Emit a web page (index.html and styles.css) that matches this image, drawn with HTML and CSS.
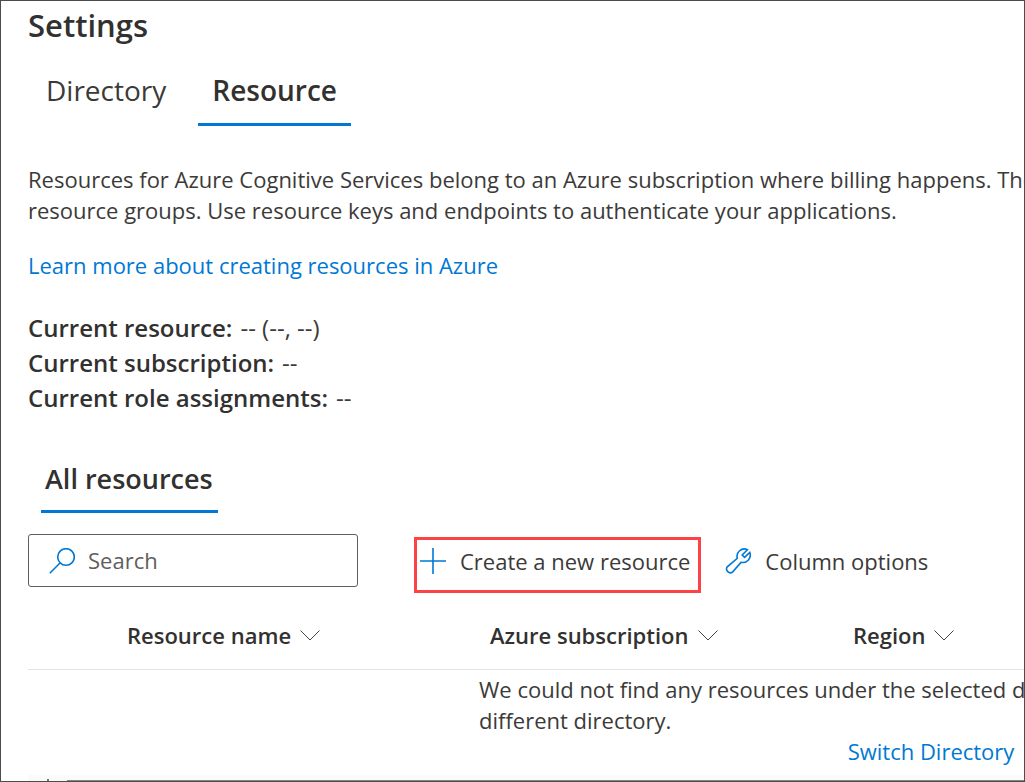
FILE: index.html
```html
<!DOCTYPE html>
<html lang="en">
<head>
<meta charset="utf-8">
<title>Settings</title>
<link rel="stylesheet" href="styles.css">
</head>
<body>
<main class="panel">
  <h1 class="title">Settings</h1>
  <nav class="tabs" aria-label="Settings sections">
    <button class="tab" type="button">Directory</button>
    <button class="tab tab-active" type="button">Resource</button>
  </nav>
  <p class="intro">Resources for Azure Cognitive Services belong to an Azure subscription where billing happens. The<br>resource groups. Use resource keys and endpoints to authenticate your applications.</p>
  <p class="learn"><a class="link" href="#learn">Learn more about creating resources in Azure</a></p>
  <dl class="current">
    <div class="current-row"><dt>Current resource:</dt><dd>-- (--, --)</dd></div>
    <div class="current-row"><dt>Current subscription:</dt><dd>--</dd></div>
    <div class="current-row"><dt>Current role assignments:</dt><dd>--</dd></div>
  </dl>
  <div class="subtabs"><button class="subtab" type="button">All resources</button></div>
  <div class="toolbar">
    <label class="search">
      <svg class="icon" viewBox="0 0 26 26" aria-hidden="true"><circle cx="17" cy="9" r="8.3"/><path d="M11 15 0.8 25.2"/></svg>
      <input class="search-input" type="search" placeholder="Search" aria-label="Search">
    </label>
    <div class="commands">
      <button class="command command-marked" type="button">
        <svg class="icon" viewBox="0 0 26 26" aria-hidden="true"><path d="M13 0v26M0 13h26"/></svg>
        <span>Create a new resource</span>
      </button>
      <button class="command" type="button">
        <svg class="icon" viewBox="0 0 26 26" aria-hidden="true"><path d="M22.4 1.7A7.3 7.3 0 0 0 12.3 10.3L2 19.1A3.9 3.9 0 0 0 7.3 24.3L16.2 14.2A7.3 7.3 0 0 0 24.8 4.5L19.6 9.3 17.2 7Z"/></svg>
        <span>Column options</span>
      </button>
    </div>
  </div>
  <div class="table-area">
    <table class="resources">
      <colgroup><col class="col-first"><col class="col"><col class="col"><col></colgroup>
      <thead>
        <tr>
          <th class="head-first" scope="col"><button class="sort" type="button">Resource name <svg class="chevron" viewBox="0 0 20 11" aria-hidden="true"><path d="M0.5 0.5 10 10 19.5 0.5"/></svg></button></th>
          <th scope="col"><button class="sort" type="button">Azure subscription <svg class="chevron" viewBox="0 0 20 11" aria-hidden="true"><path d="M0.5 0.5 10 10 19.5 0.5"/></svg></button></th>
          <th scope="col"><button class="sort" type="button">Region <svg class="chevron" viewBox="0 0 20 11" aria-hidden="true"><path d="M0.5 0.5 10 10 19.5 0.5"/></svg></button></th>
          <td></td>
        </tr>
      </thead>
      <tbody>
        <tr><td colspan="4">
          <div class="empty">
            <p class="empty-text">We could not find any resources under the selected d<br>different directory.</p>
            <a class="link" href="#directory">Switch Directory</a>
          </div>
        </td></tr>
      </tbody>
    </table>
  </div>
  <div class="scroll-strip" aria-hidden="true"><span class="scroll-arrow"></span><span class="scroll-thumb"></span></div>
</main>
</body>
</html>
```
FILE: styles.css
```css
* { box-sizing: border-box; }

body {
  margin: 0;
  background: #fff;
  color: #3b3a39;
  font: 22px/31px "Open Sans", "Noto Sans", sans-serif;
}

h1, p, dl, dd { margin: 0; }

button {
  padding: 0;
  border: 0;
  background: none;
  color: inherit;
  font: inherit;
  white-space: nowrap;
}

svg { fill: none; flex: none; }

.panel {
  display: flex;
  flex-direction: column;
  height: 100vh;
  padding-left: 27px;
  border: 1px solid #4f4b4d;
  overflow: hidden;
}

.title {
  padding-top: 4px;
  color: #323130;
  font-size: 31px;
  line-height: 41px;
  font-weight: 600;
}

.tabs {
  display: flex;
  gap: 18px;
  padding: 11px 0 0 4px;
}

.tab {
  padding: 14px 14px 13px;
  border-bottom: 3px solid transparent;
  font-size: 28px;
  line-height: 39px;
}

.tab-active {
  border-color: #0078d4;
  color: #323130;
  font-weight: 600;
}

.intro {
  padding-top: 38px;
  white-space: nowrap;
}

.learn { padding-top: 24px; }

.link {
  color: #0078d4;
  text-decoration: none;
}

.current { padding-top: 29px; }

.current-row {
  display: flex;
  gap: 8px;
  font-size: 24px;
  line-height: 35px;
}

.current dt {
  color: #323130;
  font-weight: 600;
}

.subtabs { padding: 36px 0 0 13px; }

.subtab {
  padding: 9px 5px 13px 4px;
  border-bottom: 3px solid #0078d4;
  color: #323130;
  font-size: 27px;
  line-height: 37px;
  font-weight: 600;
}

.toolbar {
  display: flex;
  align-items: flex-start;
  gap: 56px;
  padding-top: 21px;
}

.search {
  display: flex;
  align-items: center;
  gap: 13px;
  width: 330px;
  height: 53px;
  padding: 0 20px;
  border: 1px solid #605e5c;
  border-radius: 3px;
}

.search-input {
  width: 100%;
  min-width: 0;
  padding: 0;
  border: 0;
  outline: 0;
  background: none;
  color: inherit;
  font: inherit;
}

.search-input::placeholder { color: #605e5c; opacity: 1; }

.icon {
  width: 26px;
  height: 26px;
  stroke: #0078d4;
  stroke-width: 1.6;
}

.commands {
  display: flex;
  gap: 24px;
  padding-top: 3px;
}

.command {
  display: flex;
  align-items: center;
  gap: 14px;
  height: 56px;
  padding-bottom: 8px;
}

.command-marked {
  padding: 0 8px 8px 3px;
  border: 3px solid #fd4345;
}

.resources {
  width: 1806px;
  border-collapse: collapse;
  table-layout: fixed;
}

.resources th, .resources td {
  padding: 0;
  text-align: left;
}

.resources thead tr { border-bottom: 1px solid #e5e4e3; }

.resources th {
  height: 76px;
  padding-top: 10px;
  color: #323130;
  font-weight: 600;
}

.resources .head-first { padding-left: 99px; }

.col-first { width: 462px; }
.col { width: 363px; }

.sort {
  display: flex;
  align-items: center;
  gap: 9px;
}

.chevron {
  width: 20px;
  height: 11px;
  stroke: #484644;
}

.empty {
  display: flex;
  flex-direction: column;
  align-items: center;
  padding: 4px 0 6px;
}

.empty-text { width: 904px; white-space: nowrap; }

.scroll-strip {
  display: flex;
  align-items: flex-end;
  gap: 18px;
  flex: 1 0 6px;
  margin-top: auto;
  max-height: 6px;
  padding-left: 19px;
  background: #fafafa;
}

.scroll-arrow {
  width: 2px;
  height: 2px;
  background: #777;
}

.scroll-thumb {
  flex: 1;
  height: 1px;
  background: #858585;
}
```
